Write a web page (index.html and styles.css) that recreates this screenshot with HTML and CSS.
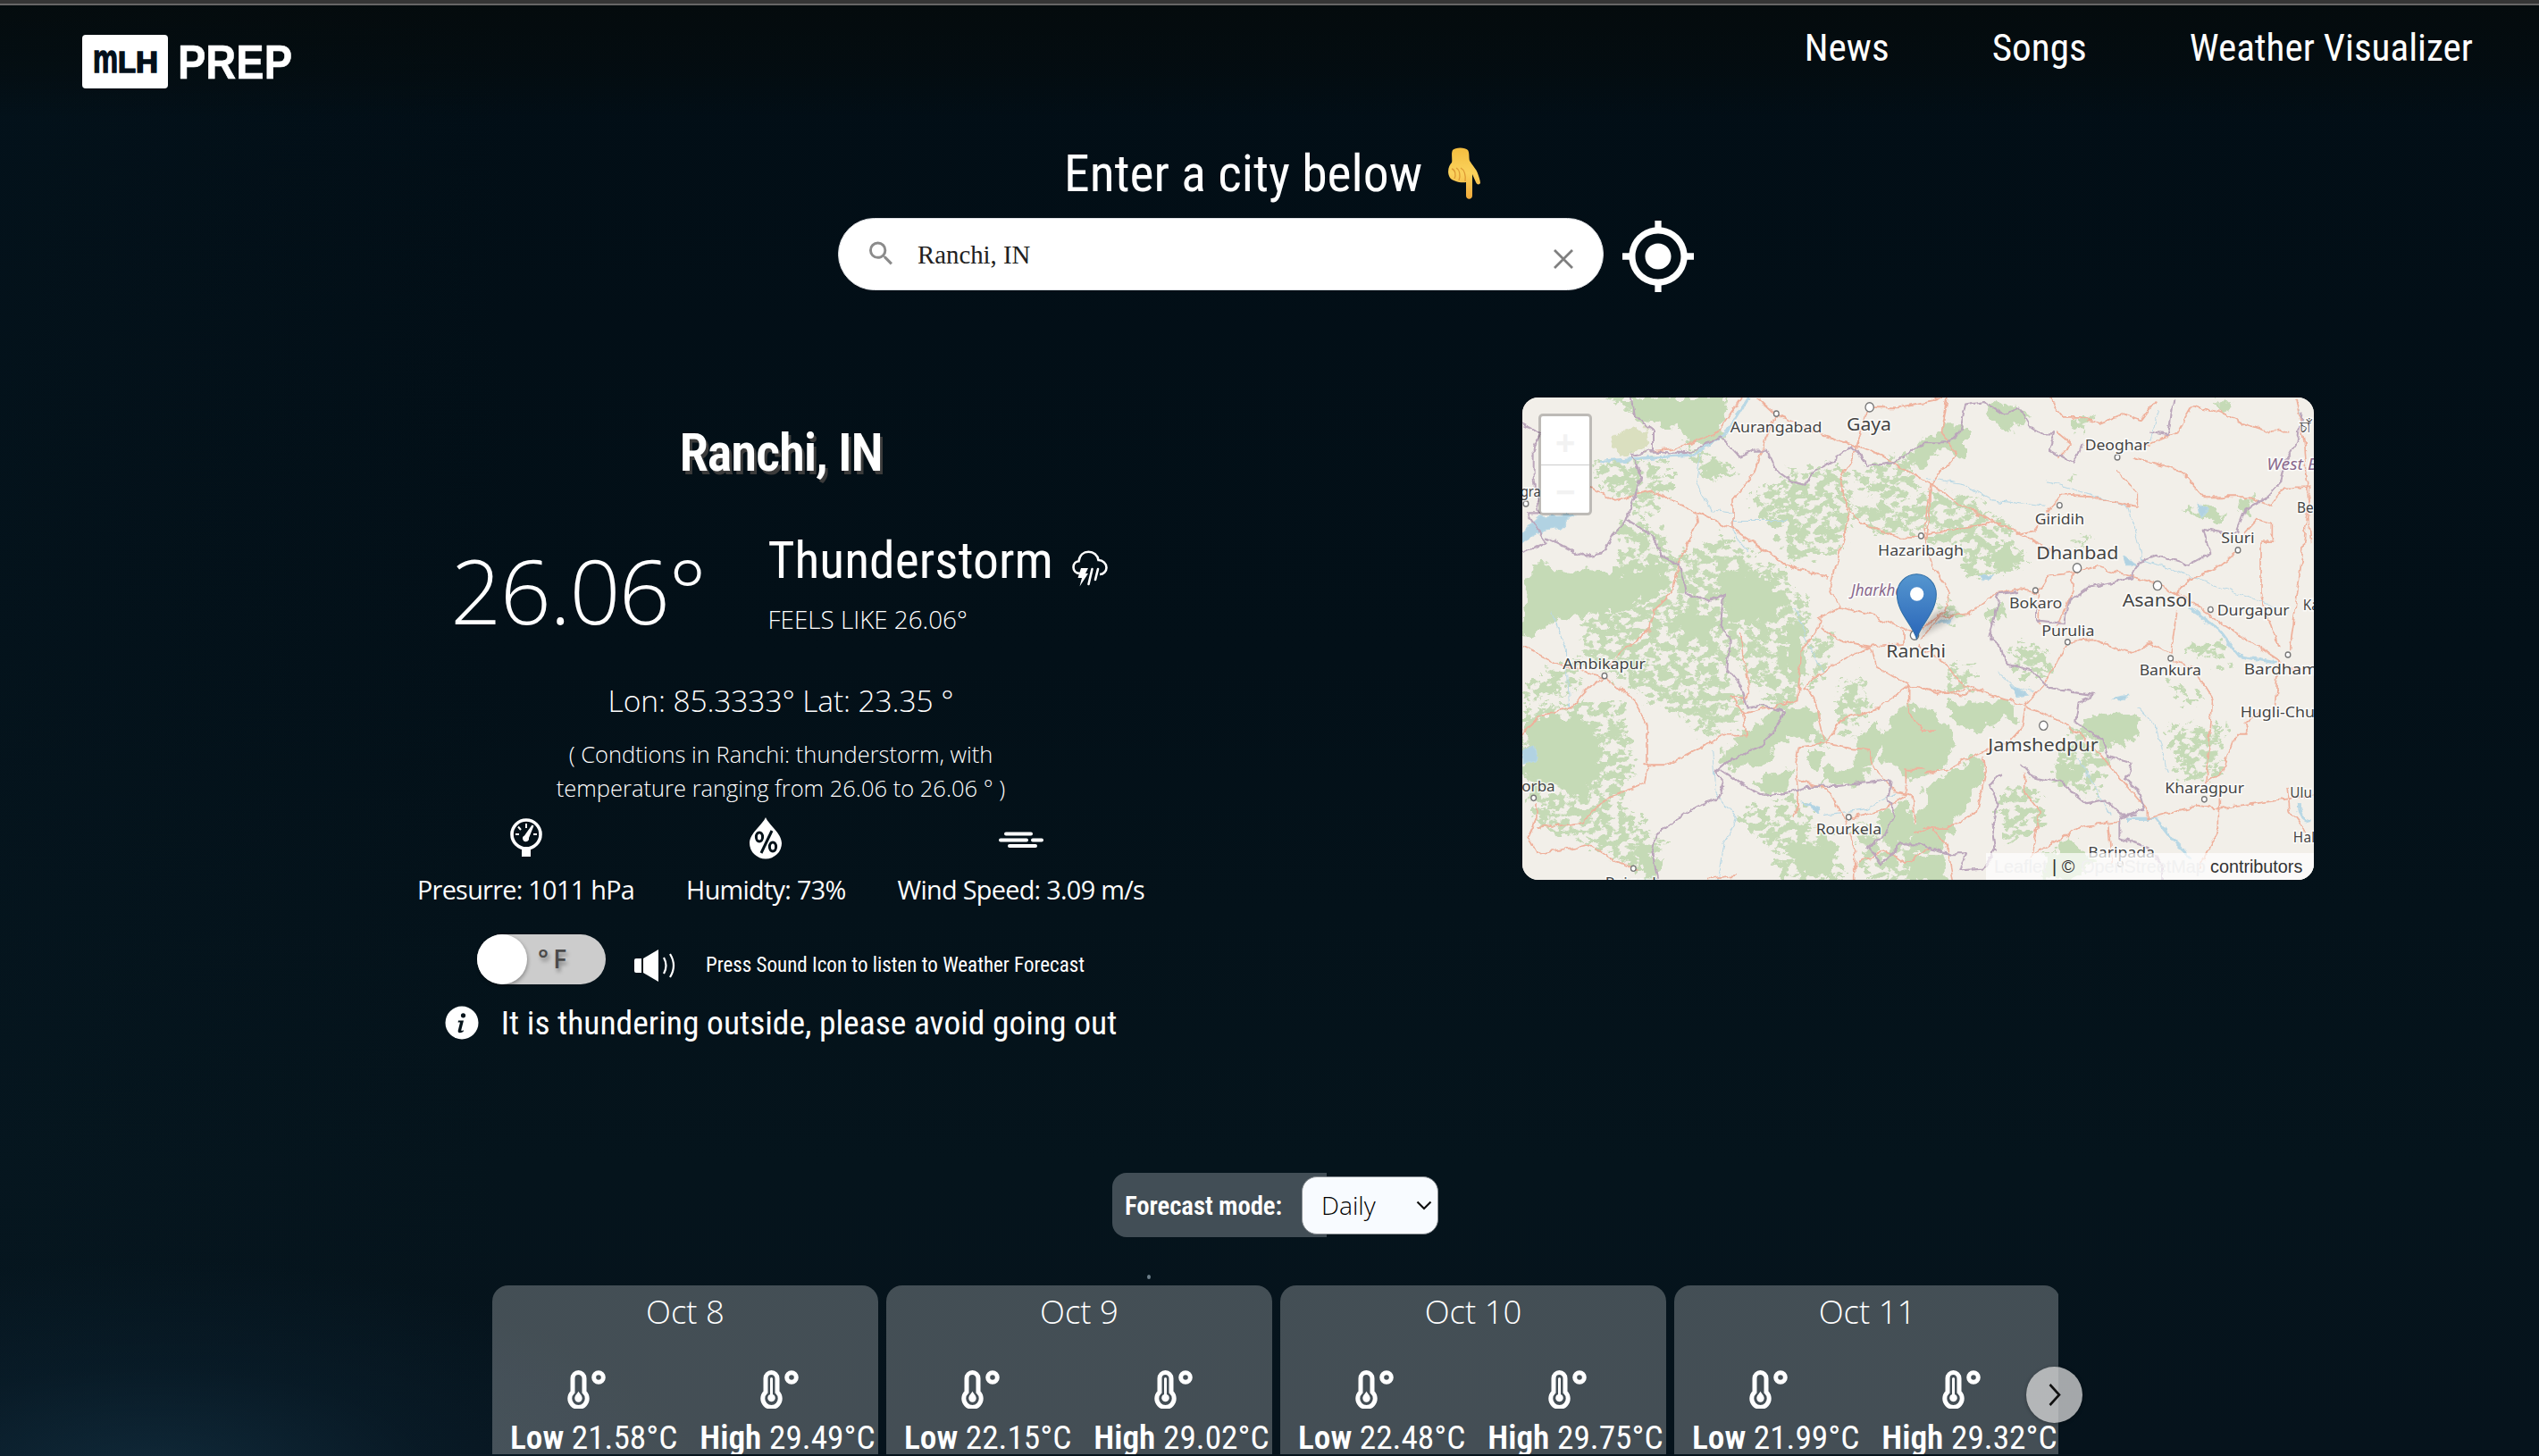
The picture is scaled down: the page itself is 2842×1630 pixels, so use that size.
FILE: index.html
```html
<!DOCTYPE html>
<html lang="en">
<head>
<meta charset="utf-8">
<title>MLH Prep Weather</title>
<link rel="stylesheet" href="styles.css">
</head>
<body>
<svg class="sprite" width="0" height="0" aria-hidden="true">
  <symbol id="thermo-low" viewBox="0 0 43 43">
    <path d="M6 9a6.500 6.500 0 0 1 13 0v15.500a9.700 9.700 0 1 1-13 0z" fill="none" stroke="#fff" stroke-width="5"/>
    <path d="M12.500 23.500c1 2.500 4.200 4.500 4.200 8a4.200 4.200 0 0 1-8.400 0c0-3.500 3.200-5.500 4.200-8z" fill="#fff"/>
    <circle cx="35" cy="8" r="5.300" fill="none" stroke="#fff" stroke-width="5"/>
  </symbol>
  <symbol id="thermo-high" viewBox="0 0 43 43">
    <path d="M6 9a6.500 6.500 0 0 1 13 0v15.500a9.700 9.700 0 1 1-13 0z" fill="none" stroke="#fff" stroke-width="5"/>
    <path d="M11 9.500a1.500 1.500 0 0 1 3 0v17.500a4.300 4.300 0 1 1-3 0z" fill="#fff"/>
    <circle cx="35" cy="8" r="5.300" fill="none" stroke="#fff" stroke-width="5"/>
  </symbol>
</svg>

<div class="window-edge"></div>
<header class="topbar">
  <a class="logo">
    <svg width="236" height="62" viewBox="0 0 236 62">
      <rect x="0" y="0" width="96" height="60" rx="4" fill="#fff"/>
      <g class="logo-mlh">
        <text class="tall" x="12" y="42" textLength="28" lengthAdjust="spacingAndGlyphs">m</text>
        <text x="40" y="42" textLength="20" lengthAdjust="spacingAndGlyphs">L</text>
        <text x="60" y="42" textLength="25" lengthAdjust="spacingAndGlyphs">H</text>
      </g>
      <text x="107" y="49" class="logo-prep" textLength="128" lengthAdjust="spacingAndGlyphs">PREP</text>
    </svg>
  </a>
  <nav class="nav"><a>News</a><a>Songs</a><a>Weather Visualizer</a></nav>
</header>

<section class="search">
  <h1 class="prompt">Enter a city below
    <svg width="38" height="60" viewBox="0 0 38 60">
      <defs><linearGradient id="hand" x1="0" y1="0" x2="0" y2="1"><stop offset="0" stop-color="#f3bd3f"/><stop offset=".5" stop-color="#fbd25c"/><stop offset="1" stop-color="#f0a93a"/></linearGradient></defs>
      <path d="M5 3C8-.5 19-.5 22 3c2 3 1 8 2 12 3 5 8 10 9 14 1 3 3 8 3 11-1 2-4 2-5-1l-4-9v24c0 5-7 5-7 0V39c-6 1-15-1-18-5-4-7-1-14 2-17 1-3-1-10 1-14z" fill="url(#hand)"/>
      <path d="M4 24c4 1 5 7 3 11M9 23c4 2 5 9 3 14M14 23c4 2 6 8 5 15" fill="none" stroke="#dd9a35" stroke-width="1.300"/>
    </svg>
  </h1>
  <div class="search-row">
    <div class="search-box">
      <svg class="i-search" width="26" height="27" viewBox="3 3 17.500 17.500"><path fill="#8b8b8b" d="M15.500 14h-.79l-.28-.27A6.471 6.471 0 0 0 16 9.500 6.500 6.500 0 1 0 9.500 16c1.610 0 3.090-.59 4.230-1.570l.27.280v.79l5 4.990L20.490 19l-4.990-5zm-6 0C7.010 14 5 11.990 5 9.500S7.010 5 9.500 5 14 7.010 14 9.500 11.990 14 9.500 14z"/></svg>
      <span class="query">Ranchi, IN</span>
      <svg class="i-clear" width="22" height="22" viewBox="0 0 22 22"><path d="M1 1l20 20M21 1L1 21" stroke="#7f7f7f" stroke-width="2.800"/></svg>
    </div>
    <svg width="80" height="80" viewBox="1 1 22 22"><path fill="#fff" d="M12 8c-2.210 0-4 1.790-4 4s1.790 4 4 4 4-1.790 4-4-1.790-4-4-4zm8.940 3A8.994 8.994 0 0 0 13 3.060V1h-2v2.060A8.994 8.994 0 0 0 3.060 11H1v2h2.060A8.994 8.994 0 0 0 11 20.940V23h2v-2.060A8.994 8.994 0 0 0 20.940 13H23v-2h-2.060zM12 19c-3.870 0-7-3.130-7-7s3.130-7 7-7 7 3.130 7 7-3.130 7-7 7z"/></svg>
  </div>
</section>

<main class="main">
  <section class="current">
    <h2 class="city">Ranchi, IN</h2>
    <div class="temp-row">
      <div class="temp">26.06°</div>
      <div>
        <div class="cond">Thunderstorm
          <svg width="40" height="41" viewBox="0 0 40 41"><path d="M9 26C4 26 1.500 22.500 1.500 19c0-4 3-6.500 6-6.800C8.500 5.500 13 1.800 18.500 1.800S28.500 5.500 29.500 11c5 0 9 4 9 8.500 0 4-3.500 7.500-7.500 7.500" fill="none" stroke="#fff" stroke-width="2.600"/><path d="M10 20h8l-3 6h3L8.500 40.500 11 31H6.500z" fill="#fff"/><path d="M22.500 21l-4 17M29 21l-3 12" stroke="#fff" stroke-width="2.600" stroke-linecap="round"/></svg>
        </div>
        <div class="feels">FEELS LIKE 26.06°</div>
      </div>
    </div>
    <div class="coords">Lon: 85.3333° Lat: 23.35 °</div>
    <p class="summary">( Condtions in Ranchi: thunderstorm, with<br>temperature ranging from 26.06 to 26.06 ° )</p>
    <div class="stats">
      <div class="stat">
        <svg width="36" height="50" viewBox="0 0 36 50"><circle cx="18" cy="21" r="16" fill="none" stroke="#fff" stroke-width="3.600"/><path d="M13 35h10v11H13z" fill="#fff"/><path d="M18 9v5M9 12.500l3 3.500M6 21h4M26 21h4" stroke="#fff" stroke-width="2"/><path d="M24.500 10.500l2 1L21 25a3.500 3.500 0 1 1-5-2.500z" fill="#fff"/></svg>
        <span>Presurre: 1011 hPa</span>
      </div>
      <div class="stat">
        <svg width="38" height="50" viewBox="0 0 38 50"><path d="M19 2c4 9 18 18 18 29a18 17.500 0 0 1-36 0C1 20 15 11 19 2z" fill="#fff"/><g fill="none" stroke="#03121a" stroke-width="3"><ellipse cx="12" cy="24" rx="3.600" ry="5"/><ellipse cx="27" cy="35" rx="3.600" ry="5"/><path d="M26 17L14 42"/></g></svg>
        <span>Humidty: 73%</span>
      </div>
      <div class="stat">
        <svg width="50" height="50" viewBox="0 0 50 50"><path d="M8 20.500h28M2 27.500h29M38 27.500h10M12 34h29" stroke="#fff" stroke-width="4" stroke-linecap="round"/></svg>
        <span>Wind Speed: 3.09 m/s</span>
      </div>
    </div>
    <div class="tools">
      <div class="toggle"><span class="knob"></span><span class="unit">° F</span></div>
      <svg class="speaker" width="49" height="36" viewBox="0 0 49 36"><path d="M1 12q0-2 2-2h6v16H3q-2 0-2-2z" fill="#fff"/><path d="M11 10L28 0v36L11 26z" fill="#fff"/><path d="M34 9q5 9 0 18M41 5q8 13 0 26" fill="none" stroke="#fff" stroke-width="2.200"/></svg>
      <span class="hint">Press Sound Icon to listen to Weather Forecast</span>
    </div>
    <div class="advice">
      <svg width="38" height="38" viewBox="0 0 38 38"><circle cx="19" cy="19" r="18.500" fill="#fff"/><circle cx="20.500" cy="10.800" r="2.600" fill="#06141b"/><path d="M15 16.500h6l-2.700 10.500q-.3 1.800 2.700.3l-.4 1.700q-6 3-6-.8L17 18.500h-2.400z" fill="#06141b"/></svg>
      <span>It is thundering outside, please avoid going out</span>
    </div>
  </section>

  <section class="map">
    <svg width="886" height="540" viewBox="42 44 2658 1485" preserveAspectRatio="none">
      <defs>
        <filter id="rough" x="-5%" y="-5%" width="110%" height="110%"><feTurbulence type="fractalNoise" baseFrequency=".022" numOctaves="4" seed="4" result="n"/><feDisplacementMap in="SourceGraphic" in2="n" scale="75" xChannelSelector="R" yChannelSelector="G"/></filter>
        <filter id="speckle" x="-5%" y="-5%" width="110%" height="110%"><feTurbulence type="fractalNoise" baseFrequency=".03 .045" numOctaves="5" seed="9" result="n"/><feColorMatrix in="n" values="0 0 0 0 0.773  0 0 0 0 0.855  0 0 0 0 0.714  14 0 0 0 -6.100" result="m"/><feDisplacementMap in="SourceGraphic" in2="n" scale="90" xChannelSelector="G" yChannelSelector="B" result="d"/><feComposite in="d" in2="m" operator="in"/></filter>
        <filter id="wobble" x="-5%" y="-5%" width="110%" height="110%"><feTurbulence type="fractalNoise" baseFrequency=".03" numOctaves="3" seed="2" result="n"/><feDisplacementMap in="SourceGraphic" in2="n" scale="22" xChannelSelector="R" yChannelSelector="G"/></filter>
        <linearGradient id="pin" x1="0" y1="0" x2="0" y2="1"><stop offset="0" stop-color="#5596cf"/><stop offset="1" stop-color="#2a66b9"/></linearGradient>
        <filter id="soft"><feGaussianBlur stdDeviation="9"/></filter>
      </defs>
      <rect x="42" y="44" width="2658" height="1485" fill="#f2efe9"/>
      <path d="M370 145L460 130 475 205 380 220 340 190z" fill="#dadfbf" filter="url(#rough)"/>

      <g class="forest" filter="url(#speckle)">
        <path d="M290 240h250v100H310z"/><path d="M400 330l110 20-20 60-70-10z"/><path d="M360 430l130 10 60 100 160-70 100 50 130 80 70 80-20 180-60 180-100-100-60-90-120 20-90-140-190 30z"/>
        <path d="M800 350l140-70 180-40 30 160-40 110-180 40-60-120z"/><path d="M1140 280l180-60 60 110-130 30z"/><path d="M1150 380l230-30 40 90-200 30z"/>
        <path d="M270 690l250-40 120 60 60 120 20 200-120 20-200-120-160-90z"/><path d="M120 870h110v80H120z"/><path d="M480 940l250-50 60 120-120 80-60-30z"/>
        <path d="M60 1000l310-20 50 200-120 220-190-20-90-200z"/><path d="M120 1330l250-40 150 130-60 90-160-70z"/><path d="M750 1330l200-60 120 140 60 110-200 10-60-100z"/>
        <path d="M1020 800l60-20-20 110-60 50z"/><path d="M1100 930l80-30 30 120-100 60z"/><path d="M1160 1350l230 20 40 150-230 10z"/><path d="M50 920l160-20 10 60-170 30z"/>
        <path d="M1380 330l180 30 120 90-60 60-220-20z"/><path d="M1520 490l190 10 20 70-200 30z"/><path d="M1420 650l100 60-40 30z"/><path d="M1480 870l80-10-30 100-60-20z"/><path d="M1680 800l130 20 0 80-100 10z"/><path d="M2280 800l120 10 20 50-160-30z"/><path d="M2210 1060l190-10-10 160-140 20z"/><path d="M2200 900l120 80-40 20z"/><path d="M1370 340l200 10-10 60-180 40z"/><path d="M1900 1050l120 100-60 120-130-60z"/><path d="M1640 1260l110-30 60 130-150 60z"/><path d="M1890 470l80 10-70 30z"/>
        <path d="M830 130l40 20zM580 200l180 50-100 40z"/>
      </g>
      <g class="forest" filter="url(#rough)">
        <path d="M300 44h430l-20 130-110 20-40-60-110-10-70-60z"/><path d="M70 560l230 20 200-10 30 60-140 60-180 30-170 60z"/><path d="M540 700l150 20-30 90-90-40z"/><path d="M640 250l130 30-100 20z"/><path d="M700 600l140-20 80 80-20 70-170 10z"/><path d="M930 740l70 40-20 160-50-30z"/><path d="M920 1010l80-20 60 120-100-20-50-50z"/><path d="M730 1110l180-110 30 90-120 100-100-20z"/><path d="M1000 1130h70l-40 70z"/><path d="M70 1040l160-20 90 100-60 140-140-10-70-60z"/>
        <path d="M1240 1090l80-100 110 20 60 100-40 80-110 30-70-60z"/><path d="M1250 1320l70-40 50 100-70 50-60-40z"/><path d="M1050 1190l160-10-20 50-140 10z"/><path d="M1150 1090l90-60 10 100-80 60z"/><path d="M920 1430l170-10-20 100-70 10z"/><path d="M420 1440l100 30-20 60-60-30z"/><path d="M800 1230l150-40-20 60-60 20z"/>
        <path d="M1330 220l130-90 70 0 0 100-80-20-120 60z"/><path d="M1590 70l110-10 70 60-110 20z"/><path d="M1900 120l60-20-40 60z"/><path d="M2360 50h80l-20 40z"/><path d="M1870 290h50l-20 20z"/><path d="M2260 380l150 20-80 40zM2420 280l50 30zM2440 350l60 0-10 60-40-20z"/>
        <path d="M1470 980l200-10 60 60-160 30-100-20z"/><path d="M1940 1030l180-10-20 70-110 40-70-60z"/><path d="M1400 1250l180-110 20 60-100 140-50 100-110-20z"/><path d="M1840 1170l100 10-40 60-60-10z"/><path d="M1790 1460l100-60 70 60-50 70h-120z"/><path d="M1330 1450h130v80h-130z"/><path d="M1610 680l50 10 0 40-60-10z"/><path d="M1600 520l80-20 40 50-60 30z"/>
      </g>

      <g class="water" filter="url(#wobble)">
        <path class="fill" d="M95 410l120-5-40 40-60 10-80 40v-30z"/><path class="fill" d="M42 1130l40-10 10 40-50 10z"/><path class="fill" d="M980 1290l60 15-5 15z"/><path class="fill" d="M1580 590h40l-30 20zM1680 930l60 30-40 5zM2060 530l50 30-40 0zM2310 370l40 20-30 20zM2020 970l60-10-30 20zM1430 740l60-20-10 20z"/>
        <path class="river" d="M800 44L720 160 620 220 300 240"/><path d="M640 215L625 310 680 390 750 400 750 460 800 520"/><path d="M750 425h180"/><path d="M960 690L1000 800 1050 890"/><path d="M680 1130L690 1260 760 1340 720 1420 700 1529"/><path d="M140 700l50 120 10 180"/><path d="M1050 1330l150-20 100-50"/><path d="M1400 290l120 20 100 50 180 20"/><path d="M1800 300l280 80 40 160 180 60 280 90"/><path class="river" d="M2280 690l100 70 70 80 120 20"/><path d="M2110 1000l60 60 40 140"/><path class="river" d="M2070 1340l100 0 60 70 60 50"/><path d="M1910 1160l110 170"/><path d="M2650 80l20 70"/><path class="river" d="M2650 1290q0 60 40 60"/><path d="M1640 890l60 50 60 10"/><path d="M2150 180l30-100"/>
      </g>

      <g class="road" filter="url(#wobble)">
        <path d="M780 44L700 150 560 200 470 210"/><path d="M830 44l60 50M895 100L850 190 820 280 750 360 750 450"/><path d="M900 100l150 60 170 50 190 100 90 60 200 90 130 60"/><path d="M1200 80L1160 210 1110 300 1140 400 1100 550 1075 630 1110 690"/><path d="M1140 380l40 50 120 45h100l10-60v-90"/><path d="M1210 75h90l110-20 60-20"/>
        <path d="M270 320l80 40 130-30 150 70 120 50 180 110 140 40"/><path d="M625 400l5 30-60 120-20 90-70 60-10 60-100 70-45 50"/><path d="M42 810l110 50 170 50 90 60 50 80v130l-10 50-130 50-80 70-150 20H90"/><path d="M42 1080l60-60 100-20 80-80 40-15"/><path d="M445 1175h80l190-90 80 0-10-70-40-50h50"/><path d="M775 770l30 180-20 30"/><path d="M785 1020l180-45 15-150 60-80 0-20 70-35 90 20 160 60"/><path d="M1050 750q20 40 160 60l110-10 0-40"/><path d="M980 940l80-60 150-70 20 60 110 60 0 80 40 60h50"/><path d="M980 940l40 20 40 150 150 20 10 50 80 80 50 10 10 90"/><path d="M1060 1110l60-80 120-30 100-70 80 20 110 10 60-20"/><path d="M1055 1110l-85 10-10 50 10 130-20 30"/><path d="M970 1220l100 30 50 90 40 100 0 90"/><path d="M1130 1340l130-30 70-40 0-80h60"/>
        <path d="M90 1290v50l-30 60 30 50 180-30 80 50 80 30"/><path d="M1170 1470l100-30 60 40 80-50"/><path d="M660 1525l100-10"/>
        <path d="M1470 44l-20 110 50 60-90 100-20 160 30 90 60 80-20 60-80 50"/><path d="M1380 790l60-70 100-10 90-60 90-20 50 20 40-60 90-10 70-15 200 50 100 50 330 200 60 20"/><path d="M1390 465l200-30 60-10M1700 465l60-10 90-110 100 5 160 30 0-40-70-70"/><path d="M1780 740v-90M1890 580l0 60-50 110M1870 810l-80 120-60 60M1870 795l90-5 130 40 60-30 70 30 20-130"/><path d="M1370 810l90 50 60 70 200 60 150 60 100 80 170 180 0 30 170-40 60 10 160-20 240-30"/><path d="M1380 940l60 20 90-20"/><path d="M1730 1000l-10 60-50 50-100 30-100 50-80 10"/><path d="M1590 1150l10 40-30 130-100 50h-80"/><path d="M1730 1200l0 60 50 60-30 140"/><path d="M1760 1450l160-85 130-15"/><path d="M2010 1360l10 120M2380 1230v150l-70 120"/><path d="M2220 850l80 30 60 90-20 260 50-30 50-120h40l-10-30 50-40"/><path d="M2240 650l30-40 120-50 50-40"/><path d="M2520 490l0 160 60 160M2520 490h40v-60l-50-10-50 50M2550 380l50-60h90l-70 500"/><path d="M2090 230l160 40 80 80 150 0 80 30"/><path d="M1810 44l50 60 60 0 60 20 80-30 60 20 50-60"/><path d="M2110 200l130-50 50-80 100 20 60 30 100 30h70"/><path d="M2640 44l30 150 20 300M2610 1240l10 80 50 60M2580 850l-10 140"/><path d="M1840 150l50 40-50 40"/><path d="M1360 1390l60-20 50 60 20 110"/>
      </g>

      <g class="border" filter="url(#wobble)">
        <path d="M42 125l60 30h60M100 160l-20 40 0 100 20 100-40 0 40 60 25 30-80 30"/><path d="M410 44l10 60 60 40 0 60-70 20 30 60-20 60-30 80-40 40-40 60-60 10-130-60"/><path d="M470 210l120 5 60-20 60-30 60 60 50-20 40 0 30 60 60 40 40 10 40-50 60-30 60-40 50 60 90-10 100-60 80 0 40-30 20-90 60-10 70 40 50-20 40 60 40 20 40 0-20 50 80 40 30-60"/><path d="M390 420l90 50 30 60 60 30 20 80 80 30 50-20-10 100 30 40-10 90 50 60 20 60 50-10 70 20-20 40-60 70-100 40-50 40 30 30-20 50-90 30-120 80-10 50 20 90"/><path d="M710 1190l80 50 60 30 90-10 60-20 100 0 100-10 80-10-10 60 20 50-30 60-60 40 50 50 60-60 60 0 120 30 40 0-20 50 80-5 40-60-10-60 20-80-30-60 40-30"/><path d="M1715 1170l40 40 100 20 80 60 60-10 60 50 50 0"/><path d="M2050 1340v60l90 30 50 60 0 40"/><path d="M2050 1340l80-30-20-60-40-30 20-50-80-20-20-50-90-60 10-60 50-20-150-20-60-60-90-20-10-50-40-30 20-60 10-70 70-10M1770 690l0 40 90 10 20-70 60-40 150-30 20-50 60-20 110 30 40-20 30-20-20-70 60 10 50 0 30-70 60-30 60-60 20-70 40-60 10-80"/><path d="M2230 50l-20 110-60-10"/>
      </g>

      <g class="town">
        <circle cx="895" cy="94" r="8.500"/><circle cx="1208" cy="74" r="14"/><circle cx="54" cy="371" r="8.500"/><circle cx="318" cy="901" r="8.500"/><circle cx="80" cy="1277" r="8.500"/><circle cx="415" cy="1494" r="8.500"/><circle cx="1138" cy="1336" r="8.500"/><circle cx="1381" cy="470" r="8.500"/><circle cx="1359" cy="776" r="14"/>
        <circle cx="2040" cy="228" r="8.500"/><circle cx="1846" cy="376" r="8.500"/><circle cx="1905" cy="569" r="14"/><circle cx="2175" cy="623" r="14"/><circle cx="2445" cy="514" r="8.500"/><circle cx="1765" cy="638" r="8.500"/><circle cx="2353" cy="697" r="8.500"/><circle cx="1873" cy="797" r="8.500"/><circle cx="2219" cy="847" r="8.500"/><circle cx="2613" cy="836" r="8.500"/><circle cx="1792" cy="1054" r="14"/><circle cx="2332" cy="1281" r="8.500"/><circle cx="2050" cy="1480" r="8.500"/>
      </g>
      <g class="place">
        <text x="740" y="152" textLength="308" lengthAdjust="spacingAndGlyphs">Aurangabad</text>
        <text class="big" x="1131" y="145" textLength="150" lengthAdjust="spacingAndGlyphs">Gaya</text>
        <text x="36" y="350" textLength="68" lengthAdjust="spacingAndGlyphs">gra</text>
        <text x="178" y="879" textLength="278" lengthAdjust="spacingAndGlyphs">Ambikapur</text>
        <text x="40" y="1256" textLength="112" lengthAdjust="spacingAndGlyphs">orba</text>
        <text x="320" y="1553" textLength="190" lengthAdjust="spacingAndGlyphs">Raigarh</text>
        <text x="1028" y="1390" textLength="220" lengthAdjust="spacingAndGlyphs">Rourkela</text>
        <text x="1236" y="530" textLength="288" lengthAdjust="spacingAndGlyphs">Hazaribagh</text>
        <text class="state" x="1146" y="655" textLength="236" lengthAdjust="spacingAndGlyphs">Jharkhand</text>
        <text class="big" x="1264" y="844" textLength="200" lengthAdjust="spacingAndGlyphs">Ranchi</text>
        <text x="1931" y="207" textLength="216" lengthAdjust="spacingAndGlyphs">Deoghar</text>
        <text x="1763" y="434" textLength="166" lengthAdjust="spacingAndGlyphs">Giridih</text>
        <text class="big" x="1768" y="543" textLength="276" lengthAdjust="spacingAndGlyphs">Dhanbad</text>
        <text class="big" x="2057" y="687" textLength="234" lengthAdjust="spacingAndGlyphs">Asansol</text>
        <text x="2389" y="493" textLength="112" lengthAdjust="spacingAndGlyphs">Siuri</text>
        <text x="1677" y="693" textLength="178" lengthAdjust="spacingAndGlyphs">Bokaro</text>
        <text x="2375" y="716" textLength="243" lengthAdjust="spacingAndGlyphs">Durgapur</text>
        <text x="1786" y="779" textLength="177" lengthAdjust="spacingAndGlyphs">Purulia</text>
        <text x="2114" y="900" textLength="208" lengthAdjust="spacingAndGlyphs">Bankura</text>
        <text x="2465" y="896" textLength="247" lengthAdjust="spacingAndGlyphs">Bardham</text>
        <text x="2453" y="1029" textLength="250" lengthAdjust="spacingAndGlyphs">Hugli-Chu</text>
        <text class="big" x="1606" y="1132" textLength="370" lengthAdjust="spacingAndGlyphs">Jamshedpur</text>
        <text x="2200" y="1262" textLength="266" lengthAdjust="spacingAndGlyphs">Kharagpur</text>
        <text x="2620" y="1276">Ulu</text>
        <text x="2630" y="1414" textLength="74">Hal</text>
        <text x="2643" y="398">Be</text>
        <text x="2663" y="698">Ka</text>
        <text x="2651" y="152">চাঁ</text>
        <text class="state" x="2542" y="266" textLength="172" lengthAdjust="spacingAndGlyphs">West B</text>
        <text x="1942" y="1459" textLength="224" lengthAdjust="spacingAndGlyphs">Baripada</text>
      </g>
      <path d="M1366 785L1410 720q40-35 80-20 20 15-40 45z" fill="#000" opacity=".2" filter="url(#soft)"/>
      <path d="M1366 787C1352 742 1300 706 1300 650a66 62 0 0 1 132 0C1432 706 1380 742 1366 787z" fill="url(#pin)" stroke="#2e6da6" stroke-width="3"/>
      <ellipse cx="1367" cy="649" rx="23" ry="21" fill="#fff"/>
    </svg>
    <div class="zoom"><span>+</span><span>−</span></div>
    <div class="attribution"><span class="faint leaf">Leaflet</span><span>| ©</span><span class="faint osm">OpenStreetMap</span><span>contributors</span></div>
  </section>
</main>

<div class="mode">
  <label class="mode-label">Forecast mode:</label>
  <div class="select">Daily
    <svg width="18" height="11" viewBox="0 0 18 11"><path d="M1.500 1.500L9 9l7.500-7.500" fill="none" stroke="#111" stroke-width="2.200"/></svg>
  </div>
</div>
<span class="star"></span>

<section class="forecast">
  <div class="strip">
    <article class="day"><h3>Oct 8</h3><div class="range">
      <div><svg width="43" height="43"><use href="#thermo-low"/></svg><p><b>Low</b> 21.58°C</p></div>
      <div><svg width="43" height="43"><use href="#thermo-high"/></svg><p><b>High</b> 29.49°C</p></div></div></article>
    <article class="day"><h3>Oct 9</h3><div class="range">
      <div><svg width="43" height="43"><use href="#thermo-low"/></svg><p><b>Low</b> 22.15°C</p></div>
      <div><svg width="43" height="43"><use href="#thermo-high"/></svg><p><b>High</b> 29.02°C</p></div></div></article>
    <article class="day"><h3>Oct 10</h3><div class="range">
      <div><svg width="43" height="43"><use href="#thermo-low"/></svg><p><b>Low</b> 22.48°C</p></div>
      <div><svg width="43" height="43"><use href="#thermo-high"/></svg><p><b>High</b> 29.75°C</p></div></div></article>
    <article class="day"><h3>Oct 11</h3><div class="range">
      <div><svg width="43" height="43"><use href="#thermo-low"/></svg><p><b>Low</b> 21.99°C</p></div>
      <div><svg width="43" height="43"><use href="#thermo-high"/></svg><p><b>High</b> 29.32°C</p></div></div></article>
  </div>
  <button class="next" aria-label="Next"><svg width="14" height="25" viewBox="0 0 14 25"><path d="M1.500 1l10.500 11.500L1.500 24" fill="none" stroke="#111" stroke-width="2.600"/></svg></button>
</section>
</body>
</html>
```
FILE: styles.css
```css
* { box-sizing: border-box; margin: 0; padding: 0; }
html { overflow: hidden; }
body {
  width: 2842px; height: 1630px; overflow: hidden; color: #fff;
  font-family: Roboto, sans-serif; font-stretch: condensed;
  background:
    radial-gradient(ellipse 620px 240px at 170px 1650px, rgba(22, 54, 74, .6), rgba(14, 40, 58, .3) 50%, transparent),
    linear-gradient(90deg, rgba(8, 30, 42, .2), transparent 20%),
    linear-gradient(180deg, #020e16 0, #031018 45%, #05141c 80%, #06131c 100%);
}
svg { display: block; flex: none; }
.sprite { position: absolute; }

.window-edge { height: 6px; background: #353535; border-bottom: 2px solid #666; }
.topbar {
  height: 126px; padding: 33px 74px 0 92px; display: flex; justify-content: space-between; align-items: flex-start;
  background: linear-gradient(rgba(5, 10, 10, .75), rgba(5, 11, 12, .5) 60%, transparent);
}
.logo-mlh { font: 700 33px "Liberation Sans", sans-serif; fill: #04101a; stroke: #04101a; stroke-width: 1.500px; }
.logo-mlh .tall { font-size: 45px; }
.logo-prep { font: 700 53px "Liberation Sans", sans-serif; fill: #fff; stroke: #fff; stroke-width: .6px; }
.nav { display: flex; gap: 115px; font-size: 43.2px; line-height: 52px; margin-top: -11.500px; }

.search { display: flex; flex-direction: column; align-items: center; padding-top: 29px; }
.prompt { display: flex; gap: 29px; align-items: center; width: 464px; white-space: nowrap; font-weight: 400; font-size: 57.6px; line-height: 68px; margin-left: 4px; }
.search-row { display: flex; align-items: center; gap: 21px; margin: 13px 0 0 -8px; }
.search-box { width: 857px; height: 81px; border-radius: 41px; background: #fff; display: flex; align-items: center; padding: 0 34px; border: 1px solid #dfe1e5; }
.i-search { margin-top: -2px; }
.query { flex: 1; margin-left: 28px; font: 28.8px "Liberation Serif", serif; color: #212121; line-height: 40px; }
.i-clear { margin: 11px -1px 0 0; }
.search-row > svg { margin-top: 5px; }

.main { display: flex; padding: 117.500px 252px 0 208px; justify-content: space-between; align-items: flex-start; height: 992px; }
.current { width: 1332px; display: flex; flex-direction: column; align-items: center; white-space: nowrap; padding-top: 27px; }
.city { font-size: 59px; font-weight: 600; letter-spacing: -1.200px; line-height: 70px; text-shadow: 3px 4px 0 #3b3b3b; }
.temp-row { display: flex; gap: 70px; margin: 51px 4px 0 0; height: 127px; }
.temp, .feels, .coords, .summary, .stats, .day h3, .select, .unit { font-family: "Open Sans", "Noto Sans", sans-serif; font-stretch: normal; font-weight: 340; }
.temp { font-size: 100px; line-height: 120px; letter-spacing: -1.600px; padding-top: 7px; }
.cond { display: flex; gap: 21px; align-items: center; font-size: 57.6px; line-height: 68px; padding-top: 1px; }
.cond svg { margin-top: 18px; }
.feels { font-size: 27.8px; line-height: 36px; margin-top: 13px; }
.coords { font-size: 33.5px; line-height: 44px; margin-top: 42px; letter-spacing: -.1px; }
.summary { font-size: 25.5px; line-height: 38px; margin-top: 19px; text-align: center; }
.stats { display: flex; gap: 58px; margin-top: 12px; font-size: 28.8px; font-weight: 400; letter-spacing: -.7px; }
.stat { display: flex; flex-direction: column; align-items: center; line-height: 40px; gap: 13px; }
.tools { display: flex; align-items: center; height: 56px; margin-top: 30.500px; width: 680px; }
.toggle { width: 144px; height: 56px; border-radius: 28px; background: #ccc; display: flex; align-items: center; }
.knob { width: 56px; height: 56px; border-radius: 50%; background: #fff; box-shadow: 1px 2px 4px rgba(0, 0, 0, .3); }
.unit { margin: -2px 0 0 12px; font-size: 28px; font-weight: 600; color: #4a4a4a; text-shadow: 2px 4px 4px rgba(0, 0, 0, .35); line-height: 40px; letter-spacing: -1px; }
.speaker { margin: 13px 0 0 31px; }
.hint { font-size: 23px; line-height: 30px; margin: 13px 0 0 32px; }
.advice { display: flex; align-items: center; gap: 25px; font-size: 37.500px; line-height: 44px; margin-top: 20.500px; }

.map { position: relative; width: 886px; height: 540px; border-radius: 18px; overflow: hidden; background: #f2efe9; }
.forest { fill: #c5dab6; }
.water { fill: none; stroke: #b9d8e5; stroke-width: 3; }
.water .fill { fill: #b1d2e2; }
.water .river { stroke-width: 9; }
.road { fill: none; stroke: #efb19c; stroke-width: 5; }
.border { fill: none; stroke: #bba6bb; stroke-width: 6; stroke-linejoin: round; }
.town { fill: #fff; stroke: #777; stroke-width: 4; }
.place { font: 46px "Noto Sans", sans-serif; fill: #444; stroke: rgba(255, 255, 255, .75); stroke-width: 8px; paint-order: stroke; }
.place .big { font-size: 56px; }
.place .state { font-style: italic; fill: #89688c; font-size: 48px; }
.zoom { position: absolute; left: 18px; top: 18px; width: 60px; height: 114px; border: 3px solid rgba(0, 0, 0, .22); border-radius: 5px; background: #fff; background-clip: padding-box; display: grid; grid-template-rows: 1fr 1fr; text-align: center; font: 700 38px/60px "Liberation Sans", sans-serif; color: #f2f2f2; }
.zoom span { height: 54px; }
.zoom span + span { border-top: 1px solid #ccc; }
.attribution { position: absolute; right: 0; bottom: 0; width: 367px; height: 30px; padding: 0 9px; background: rgba(255, 255, 255, .7); color: #333; display: flex; font: 19.800px/30px "Liberation Sans", sans-serif; white-space: pre; }
.faint { color: #f1f1f1; }
.leaf { width: 65px; }
.osm { width: 150px; text-align: center; margin-left: 2px; }
.attribution span:nth-child(2) { width: 25px; }

.mode { width: 365px; height: 72px; margin: -6px 0 0 1245px; display: flex; align-items: center; border-radius: 16px; background: linear-gradient(#424e56, #424e56) 0 0 / 240px 100% no-repeat; }
.mode-label { flex: none; width: 212px; padding-left: 14px; font-size: 28.800px; font-weight: 600; line-height: 40px; letter-spacing: -.1px; padding-top: 1px; }
.select { width: 153px; height: 65px; border: 1px solid #8a8f94; border-radius: 17px; background: #f8fbff; color: #000; display: flex; align-items: center; justify-content: space-between; padding: 0 6px 0 21px; font-size: 28.300px; line-height: 40px; }

.star { display: block; width: 4px; height: 5px; margin: 42px 0 0 1284px; border-radius: 50%; background: #6d7f8a; }

.forecast { position: relative; margin: 7px 0 0 551px; width: 1753px; height: 189px; }
.strip { display: flex; gap: 9px; overflow: hidden; height: 189px; }
.day { flex: none; width: 432px; height: 300px; border-radius: 18px; background: rgba(255, 255, 255, .25); }
.day h3 { text-align: center; font-size: 36.500px; line-height: 50px; padding-top: 4px; }
.range { display: flex; white-space: nowrap; padding: 41px 0 0 20px; gap: 25px; }
.range > div { display: flex; flex-direction: column; align-items: center; }
.range svg { margin-right: 17px; }
.range p { font-size: 37.300px; line-height: 44px; margin-top: 10px; font-weight: 400; }
.range b { font-weight: 600; }
.next { position: absolute; left: 1717px; top: 91px; width: 63px; height: 63px; border: 0; border-radius: 50%; background: rgba(218, 218, 218, .75); display: grid; place-items: center; box-shadow: 0 1px 4px rgba(0, 0, 0, .3); }
```
